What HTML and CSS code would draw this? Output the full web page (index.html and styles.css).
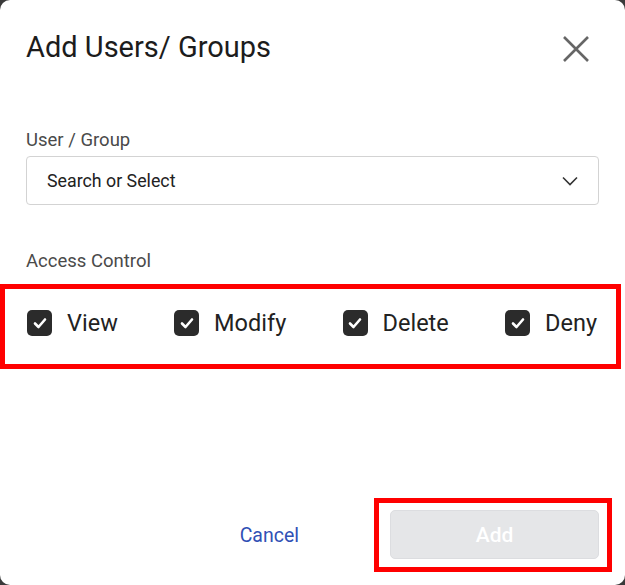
FILE: index.html
```html
<!DOCTYPE html>
<html lang="en">
<head>
    <meta charset="UTF-8">
    <meta name="viewport" content="width=device-width, initial-scale=1.0">
    <title>Add Users/ Groups</title>
    <link rel="stylesheet" href="styles.css">
</head>
<body>

    <!-- Dialog -->
    <div class="dialog">
        <div class="dialog-header">
            <h1>Add Users/ Groups</h1>
            <button class="close-btn" aria-label="Close">
                <svg width="28" height="28" viewBox="0 0 28 28">
                    <path d="M2 2 L26 26 M26 2 L2 26" stroke="#666" stroke-width="2.6" fill="none"/>
                </svg>
            </button>
        </div>

        <!-- User / Group -->
        <label class="field-label">User / Group</label>
        <div class="select-box">
            <span>Search or Select</span>
            <svg width="16" height="10" viewBox="0 0 16 10">
                <path d="M1 1.5 L8 8.5 L15 1.5" stroke="#333" stroke-width="1.6" fill="none"/>
            </svg>
        </div>

        <!-- Access Control -->
        <label class="field-label access-label">Access Control</label>
        <div class="access-row">
            <label class="check-item"><span class="check-box"><svg width="14" height="12" viewBox="0 0 14 12"><path d="M2 6.5 L5.5 10 L12 2.5" stroke="#fff" stroke-width="2.6" fill="none" stroke-linecap="round" stroke-linejoin="round"/></svg></span>View</label>
            <label class="check-item"><span class="check-box"><svg width="14" height="12" viewBox="0 0 14 12"><path d="M2 6.5 L5.5 10 L12 2.5" stroke="#fff" stroke-width="2.6" fill="none" stroke-linecap="round" stroke-linejoin="round"/></svg></span>Modify</label>
            <label class="check-item"><span class="check-box"><svg width="14" height="12" viewBox="0 0 14 12"><path d="M2 6.5 L5.5 10 L12 2.5" stroke="#fff" stroke-width="2.6" fill="none" stroke-linecap="round" stroke-linejoin="round"/></svg></span>Delete</label>
            <label class="check-item"><span class="check-box"><svg width="14" height="12" viewBox="0 0 14 12"><path d="M2 6.5 L5.5 10 L12 2.5" stroke="#fff" stroke-width="2.6" fill="none" stroke-linecap="round" stroke-linejoin="round"/></svg></span>Deny</label>
        </div>

        <!-- Alt butonlar -->
        <div class="dialog-footer">
            <button class="cancel-btn">Cancel</button>
            <div class="add-wrap">
                <button class="add-btn" disabled>Add</button>
            </div>
        </div>
    </div>

</body>
</html>
```

FILE: styles.css
```css
/* Genel stil */
body {
    font-family: Roboto, "Liberation Sans", sans-serif;
    background-color: #3a3a3a;
    margin: 0;
    padding: 0;
}

.dialog {
    width: 625px;
    height: 585px;
    background-color: #ffffff;
    border-radius: 10px;
    display: flex;
    flex-direction: column;
    box-sizing: border-box;
}

/* Başlık */
.dialog-header {
    display: flex;
    align-items: center;
    justify-content: space-between;
    padding: 29px 35px 0 26px;
}

.dialog-header h1 {
    margin: 0;
    font-size: 29px;
    font-weight: 400;
    line-height: 36px;
    color: #1c1c1c;
}

.close-btn {
    background: none;
    border: none;
    padding: 0;
    margin-top: 4px;
    cursor: pointer;
    display: flex;
}

.field-label {
    display: block;
    margin: 64px 26px 0;
    font-size: 18.5px;
    line-height: 22px;
    color: #4a4a4a;
}

.select-box {
    display: flex;
    align-items: center;
    justify-content: space-between;
    margin: 5px 26px 0;
    height: 49px;
    box-sizing: border-box;
    padding: 0 20px;
    border: 1px solid #d3d3d3;
    border-radius: 4px;
    font-size: 17.8px;
    color: #222;
}

.access-label {
    margin-top: 45px;
}

/* Erişim kontrolü */
.access-row {
    display: flex;
    align-items: center;
    justify-content: space-between;
    margin: 12px 4px 0 0;
    padding: 20px 19px 27px 22px;
    border: 5px solid #ff0000;
}

.check-item {
    display: flex;
    align-items: center;
    gap: 15px;
    font-size: 23.5px;
    line-height: 28px;
    color: #222;
}

.check-box {
    width: 25px;
    height: 26px;
    background-color: #2b2b2b;
    border-radius: 5px;
    display: flex;
    align-items: center;
    justify-content: center;
}

/* Alt kısım */
.dialog-footer {
    margin-top: auto;
    display: flex;
    align-items: center;
    justify-content: flex-end;
    padding: 0 13px 13px 0;
}

.cancel-btn {
    background: none;
    border: none;
    padding: 0;
    margin-right: 75px;
    font-family: inherit;
    font-size: 19.5px;
    color: #3050b5;
    cursor: pointer;
}

.add-wrap {
    border: 5px solid #ff0000;
    padding: 7px 8px 8px 11px;
}

.add-btn {
    width: 209px;
    height: 49px;
    background-color: #e5e6e8;
    border: 1px solid #dcdde0;
    border-radius: 5px;
    font-family: inherit;
    font-size: 21px;
    font-weight: 500;
    color: #ffffff;
}
```
